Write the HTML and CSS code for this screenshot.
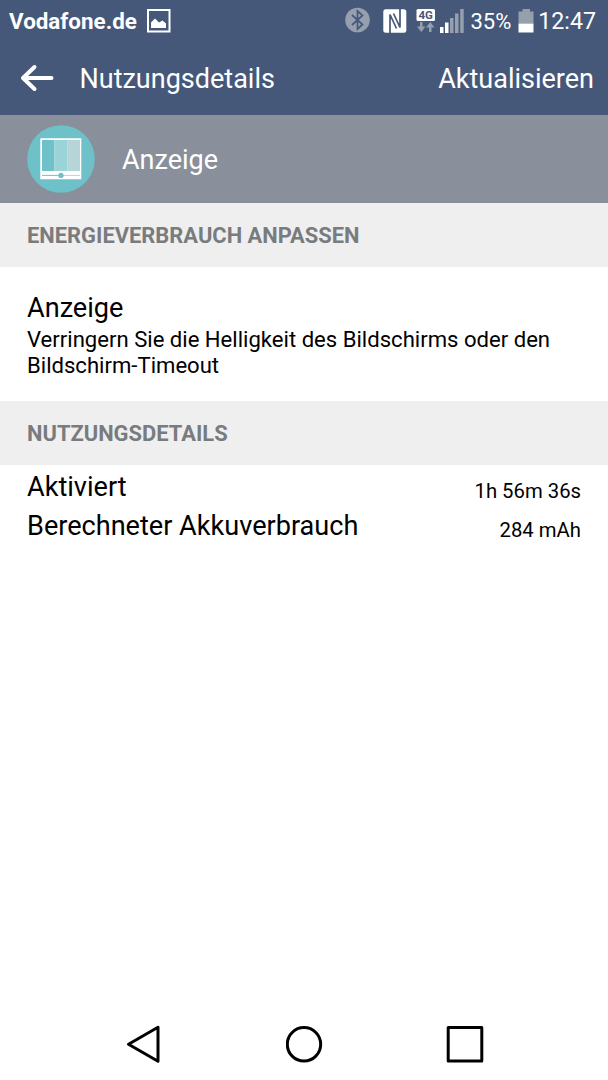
FILE: index.html
```html
<!DOCTYPE html>
<html lang="de">
<head>
<meta charset="utf-8">
<title>Nutzungsdetails</title>
<link rel="stylesheet" href="styles.css">
</head>
<body>
<div class="screen">
  <div class="statusbar">
    <span class="carrier">Vodafone.de</span>
    <svg class="picture" width="24" height="24" viewBox="0 0 24 24"><rect x="1" y="1" width="21.500" height="21.500" fill="none" stroke="#fff" stroke-width="2"/><path d="M4 19V13.500L8 9.500L12 13.500L15.500 11.500L19 14.500V19Z" fill="#fff"/></svg>
    <div class="indicators">
      <svg class="bluetooth" width="25" height="26" viewBox="0 0 25 26"><circle cx="12.500" cy="13" r="12.300" fill="#959fae"/><path d="M7 8L17.500 17.500L12.500 22V4L17.500 8.500L7 18" fill="none" stroke="#465879" stroke-width="1.700"/></svg>
      <svg class="nfc" width="24" height="24" viewBox="0 0 24 24"><rect x=".3" y=".3" width="23" height="23.400" rx="2.500" fill="#fff"/><path d="M7 24V5.500L13.500 19.500M17 0V18.500L10.500 4.500" fill="none" stroke="#465879" stroke-width="1.700" stroke-linejoin="bevel"/></svg>
      <svg class="network" width="20" height="24" viewBox="0 0 20 24"><rect x=".5" width="18.500" height="12" rx="1.500" fill="#fff"/><text class="network-label" x="9.700" y="9.900" text-anchor="middle">4G</text><path d="M4 13H6.500V17.500H9.500L5.300 23L1 17.500H4ZM13 23H15.500V18.500H18.500L14.300 13L10 18.500H13Z" fill="#959fae"/></svg>
      <svg class="signal" width="24" height="24" viewBox="0 0 24 24"><path d="M0 18H3.500V24H0ZM5 13.500H8.500V24H5Z" fill="#fff"/><path d="M10 9H13.500V24H10ZM15 4.500H18.500V24H15ZM20.200 0H23.700V24H20.200Z" fill="#959fae"/></svg>
      <span class="percent">35%</span>
      <svg class="battery" width="16" height="24" viewBox="0 0 16 24"><path d="M4.500 0H12V2.500H15.500V14.500H.5V2.500H4.500Z" fill="#959fae"/><path d="M.5 14.500H15.500V23.500H.5Z" fill="#fff"/></svg>
      <span class="clock">12:47</span>
    </div>
  </div>
  <div class="appbar">
    <svg class="back" width="34" height="28" viewBox="0 0 34 28"><path d="M14.500 3L3 14L14.500 25M3.500 14H31.500" fill="none" stroke="#fff" stroke-width="4" stroke-linecap="round" stroke-linejoin="round"/></svg>
    <span class="title">Nutzungsdetails</span>
    <span class="refresh">Aktualisieren</span>
  </div>
  <div class="subject">
    <svg class="subject-icon" width="68" height="68" viewBox="0 0 68 68"><circle cx="34" cy="34" r="33.800" fill="#6ec1c8"/><path d="M13.300 13.300H54.300V54.300H13.300Z" fill="#fff"/><path d="M15 15H27.500V46H15Z" fill="#6ec1c8"/><path d="M27.500 15H40.200V46H27.500Z" fill="#9bd4d8"/><path d="M40.200 15H53V46H40.200Z" fill="#b5d5d9"/><path d="M15 50.400H34" stroke="#6ec1c8"/><path d="M34 50.400H53" stroke="#b5d5d9"/><circle cx="34" cy="50.400" r="2.600" fill="#6ec1c8"/></svg>
    <span class="subject-name">Anzeige</span>
  </div>
  <div class="section">ENERGIEVERBRAUCH ANPASSEN</div>
  <div class="item">
    <div class="item-title">Anzeige</div>
    <div class="item-text">Verringern Sie die Helligkeit des Bildschirms oder den<br>Bildschirm-Timeout</div>
  </div>
  <div class="section">NUTZUNGSDETAILS</div>
  <div class="rows">
    <div class="row"><span class="label">Aktiviert</span><span class="value">1h 56m 36s</span></div>
    <div class="row"><span class="label">Berechneter Akkuverbrauch</span><span class="value">284 mAh</span></div>
  </div>
  <div class="navbar">
    <svg width="38" height="38" viewBox="0 0 38 38"><path d="M3.500 19.300L33 2.300V36.300Z" fill="none" stroke="#000" stroke-width="3" stroke-linejoin="round"/></svg>
    <svg width="38" height="38" viewBox="0 0 38 38"><circle cx="18" cy="19.300" r="16.700" fill="none" stroke="#000" stroke-width="3"/></svg>
    <svg width="38" height="38" viewBox="0 0 38 38"><rect x="2.200" y="2.500" width="33.600" height="33.600" fill="none" stroke="#000" stroke-width="3" stroke-linejoin="round"/></svg>
  </div>
</div>
</body>
</html>
```
FILE: styles.css
```css
body {
  margin: 0;
  font-family: Roboto, "Noto Sans", sans-serif;
  color: #000;
  background: #fff;
}
svg { display: block; flex: none; }
.screen {
  width: 608px;
  height: 1080px;
  display: flex;
  flex-direction: column;
  overflow: hidden;
  white-space: nowrap;
}
.statusbar {
  height: 42px;
  flex: none;
  display: flex;
  align-items: center;
  padding: 0 12px 0 9px;
  background: #465879;
  color: #fff;
}
.carrier { font-size: 22.4px; font-weight: 700; width: 138px; }
.picture { margin-top: -1px; }
.indicators { display: flex; align-items: center; margin-left: auto; }
.bluetooth { margin-right: 13px; margin-top: -2px; }
.nfc { margin-right: 9px; margin-top: -1px; }
.network { margin-right: 4px; }
.network-label { font-size: 11.5px; font-weight: 700; fill: #465879; }
.signal { margin-right: 6px; margin-top: -1px; }
.percent { font-size: 22px; margin-right: 7px; }
.battery { margin-right: 4px; margin-top: -1px; }
.clock { font-size: 23.2px; }
.appbar {
  height: 73px;
  flex: none;
  display: flex;
  align-items: center;
  padding: 0 14px 2px 20px;
  box-sizing: border-box;
  background: #465879;
  color: #fff;
  font-size: 27px;
}
.title { margin-left: 25.500px; padding-top: 2px; }
.refresh { margin-left: auto; padding-top: 2px; }
.subject {
  height: 87.500px;
  flex: none;
  display: flex;
  align-items: center;
  padding-left: 27px;
  background: #898f9b;
  color: #fff;
  font-size: 27px;
}
.subject-name { margin-left: 27px; padding-top: 2px; }
.section {
  height: 64px;
  flex: none;
  box-sizing: border-box;
  padding-left: 27px;
  background: #efefef;
  color: #797c7e;
  font-size: 21.9px;
  font-weight: 700;
  line-height: 65px;
}
.item { height: 134px; flex: none; box-sizing: border-box; padding: 23px 27px 0; }
.item-title { font-size: 27.1px; line-height: 36px; }
.item-text { font-size: 22.1px; line-height: 26px; }
.rows { padding: 3px 27px 0; }
.row { height: 39px; display: flex; align-items: center; justify-content: space-between; }
.label { font-size: 27.1px; padding-bottom: 1px; }
.value { font-size: 20.3px; padding-top: 7px; }
.navbar {
  display: flex;
  justify-content: space-between;
  margin-top: auto;
  padding: 0 124px 17px 125px;
}
```
